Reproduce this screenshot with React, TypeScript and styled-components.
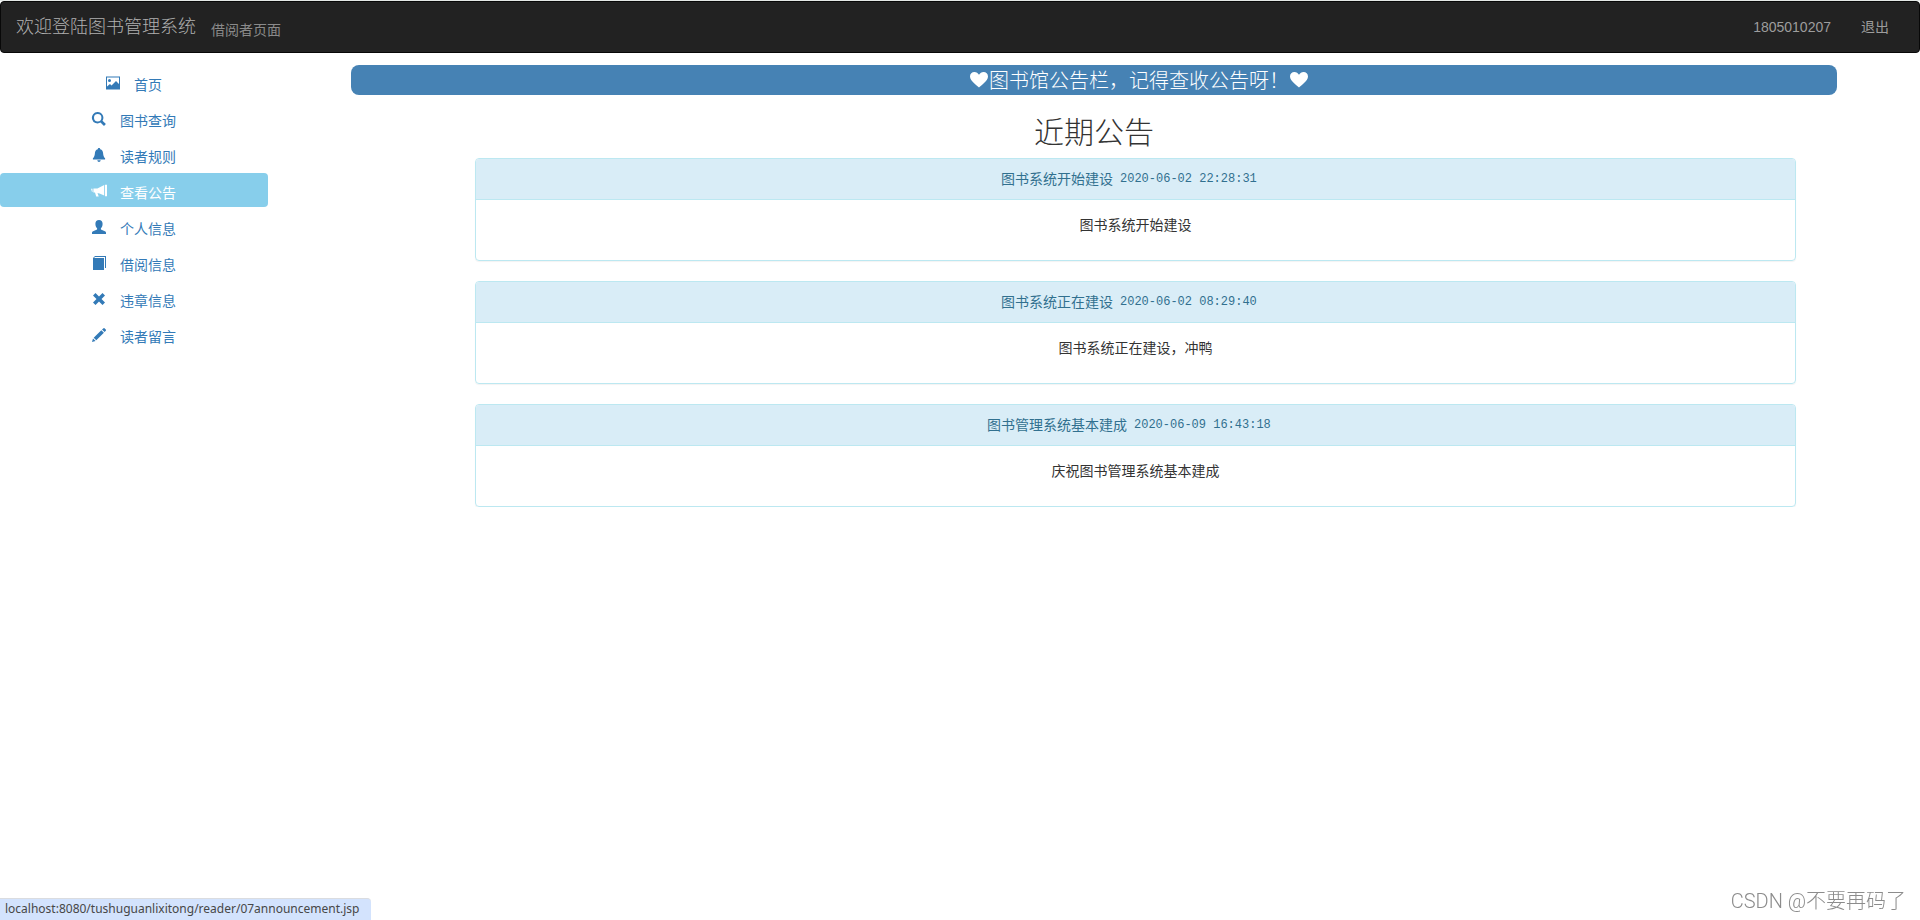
import React from 'react';
import styled, { createGlobalStyle } from 'styled-components';

const GlobalStyle = createGlobalStyle`
  * { box-sizing: border-box; }
  body {
    margin: 0;
    background: #fff;
    color: #333;
    font-family: 'Liberation Sans', 'Noto Sans CJK SC', sans-serif;
    font-size: 14px;
    font-weight: 400;
    line-height: 20px;
  }
  a { text-decoration: none; }
`;

const Page = styled.div`
  border-top: 1px solid #e4e8e6;
`;

const Navbar = styled.nav`
  display: flex;
  align-items: center;
  height: 52px;
  padding: 0 15px;
  background: #222;
  border: 1px solid #080808;
  border-radius: 4px;
  color: #9d9d9d;
`;

const Brand = styled.a`
  font-size: 18px;
  font-weight: 300;
  color: #b0b0b0;
`;

const Role = styled.span`
  margin-left: 15px;
  padding-top: 6px;
  color: #8a8a8a;
`;

const NavLinks = styled.div`
  display: flex;
  margin-left: auto;
`;

const NavLink = styled.a`
  padding: 0 15px;
  color: #9d9d9d;
`;

const Columns = styled.div`
  display: flex;
  padding-top: 12px;
`;

const Sidebar = styled.ul`
  display: flex;
  flex-direction: column;
  gap: 2px;
  flex: 0 0 14%;
  margin: 0;
  padding: 0 1px 0 0;
  list-style: none;
`;

const SideLink = styled.a<{ $active?: boolean }>`
  display: flex;
  justify-content: center;
  align-items: center;
  gap: 14px;
  height: 34px;
  padding: 10px 0 4px;
  border-radius: 4px;
  color: ${p => (p.$active ? '#fff' : '#337ab7')};
  background: ${p => (p.$active ? 'skyblue' : 'transparent')};
`;

const Glyph = styled.svg`
  display: block;
  width: 16px;
  height: 14px;
  margin: 0 -1px 4px;
  fill: currentColor;
`;

const Main = styled.main`
  flex: 1;
  margin-left: 82px;
  margin-right: 83px;
`;

const Banner = styled.div`
  display: flex;
  justify-content: center;
  align-items: center;
  height: 30px;
  padding: 2px 0 0 90px;
  border-radius: 8px;
  background: steelblue;
  color: #fff;
  font-size: 20px;
  font-weight: 300;
`;

const Heart = styled.svg`
  width: 20px;
  height: 20px;
  margin-bottom: 2px;
  fill: currentColor;
`;

const Title = styled.h1`
  margin: 20px 0 8px;
  font-size: 30px;
  font-weight: 300;
  line-height: 35px;
  text-align: center;
`;

const Notices = styled.div`
  display: flex;
  flex-direction: column;
  gap: 20px;
  margin-left: 124px;
  margin-right: 41px;
`;

const Panel = styled.article`
  border: 1px solid #bce8f1;
  border-radius: 4px;
  box-shadow: 0 1px 1px rgba(0, 0, 0, 0.05);
  text-align: center;
`;

const PanelHeading = styled.header`
  display: flex;
  justify-content: center;
  align-items: center;
  gap: 7px;
  padding: 10px 28px 10px 15px;
  border-bottom: 1px solid #bce8f1;
  border-radius: 3px 3px 0 0;
  background: #d9edf7;
  color: #31708f;
`;

const Stamp = styled.time`
  font-family: 'Liberation Mono', monospace;
  font-size: 12px;
`;

const PanelBody = styled.p`
  margin: 0;
  padding: 15px 15px 25px;
`;

const StatusBar = styled.div`
  position: fixed;
  left: 0;
  bottom: 0;
  height: 22px;
  padding: 0 12px 0 5px;
  border-top: 1px solid #dadce0;
  border-top-right-radius: 4px;
  background: #d3e3fd;
  color: #474747;
  font-family: 'Noto Sans', sans-serif;
  font-size: 12px;
  line-height: 20px;
`;

const Watermark = styled.div`
  position: fixed;
  right: 14px;
  bottom: 4px;
  color: #8c8c8c;
  font-family: Roboto, 'Noto Sans CJK SC', sans-serif;
  font-size: 20px;
  font-weight: 300;
  line-height: 30px;
`;

const icons: Record<string, React.ReactNode> = {
  image: <path fillRule="evenodd" d="M1 .5h14v13H1zM2 1.500v9L5 8l1.500 1.500L11 5l3 3V1.500zM4.500 3a1.500 1.500 0 1 1 0 3 1.500 1.500 0 0 1 0-3z" />,
  search: <path fillRule="evenodd" d="M6.700 0a5.700 5.700 0 0 1 4.800 8.700l3.400 3.300-1.900 2-3.500-3.400A5.700 5.700 0 1 1 6.700 0zm0 2a3.700 3.700 0 1 0 0 7.400 3.700 3.700 0 0 0 0-7.400z" />,
  bell: <path d="M8 0c.8 0 1.200.5 1.200 1.200C11.200 1.800 12 3.400 12.100 5.200c.2 2.600.8 4 2 5.100V11.500H1.900v-1.200c1.200-1.100 1.800-2.500 2-5.100C4 3.400 4.800 1.800 6.800 1.200 6.800.5 7.200 0 8 0zM6.300 12.300h3.400C9.500 13.400 8.900 14 8 14s-1.500-.6-1.700-1.700z" />,
  bullhorn: <path d="M14 .8h2v11.500h-2zM13.200 1v10.500L8.500 9.400 6.500 9l1.200 3.500H5.200L4 8.600H2.400V4.500h4zM0 4.800h1.500v3.300H1z" />,
  user: <path d="M8 0c2.300 0 3.600 1.500 3.600 3.800 0 1.900-.7 3.600-1.700 4.500v1.200l4 1.700c.8.4 1.100.8 1.100 1.500V14H1v-1.300c0-.7.3-1.100 1.100-1.500l4-1.700V8.300c-1-.9-1.700-2.600-1.700-4.500C4.400 1.500 5.700 0 8 0z" />,
  book: <path fillRule="evenodd" d="M4 0h11v12h-1V1H4L3 2h10v12H2V2z" />,
  remove: <path d="M4.500 1 8 4.500 11.500 1 14 3.500 10.500 7l3.500 3.500-2.500 2.500L8 9.500 4.500 13 2 10.500 5.500 7 2 3.500z" />,
  pencil: <path d="m12.500.2.7-.2L15 1.800v.8l-1.400 1.500-2.600-2.600zM10.300 2.200l2.600 2.600-7.600 7.500-2.600-2.600zM2 10.500 4.600 13 1 14z" />,
};

const menu = [
  { label: '首页', icon: 'image' },
  { label: '图书查询', icon: 'search' },
  { label: '读者规则', icon: 'bell' },
  { label: '查看公告', icon: 'bullhorn', active: true },
  { label: '个人信息', icon: 'user' },
  { label: '借阅信息', icon: 'book' },
  { label: '违章信息', icon: 'remove' },
  { label: '读者留言', icon: 'pencil' },
];

const notices = [
  { title: '图书系统开始建设', time: '2020-06-02 22:28:31', body: '图书系统开始建设' },
  { title: '图书系统正在建设', time: '2020-06-02 08:29:40', body: '图书系统正在建设，冲鸭' },
  { title: '图书管理系统基本建成', time: '2020-06-09 16:43:18', body: '庆祝图书管理系统基本建成' },
];

const HeartIcon = () => (
  <Heart viewBox="0 0 20 20" aria-hidden="true">
    <path d="M10 17.500C8.500 15.800 1 11 1 6.500 1 3.700 3 2 5.400 2 7.500 2 9 3.200 10 4.800 11 3.200 12.500 2 14.600 2 17 2 19 3.700 19 6.500c0 4.500-7.500 9.300-9 11z" />
  </Heart>
);

export default function App() {
  return (
    <Page lang="zh-CN">
      <GlobalStyle />
      <Navbar>
        <Brand href="#">欢迎登陆图书管理系统</Brand>
        <Role>借阅者页面</Role>
        <NavLinks>
          <NavLink href="#">1805010207</NavLink>
          <NavLink href="#">退出</NavLink>
        </NavLinks>
      </Navbar>
      <Columns>
        <Sidebar>
          {menu.map(item => (
            <li key={item.label}>
              <SideLink href="#" $active={item.active} aria-current={item.active ? 'page' : undefined}>
                <Glyph viewBox="0 0 16 14" aria-hidden="true">{icons[item.icon]}</Glyph>
                {item.label}
              </SideLink>
            </li>
          ))}
        </Sidebar>
        <Main>
          <Banner>
            <HeartIcon />
            图书馆公告栏，记得查收公告呀！
            <HeartIcon />
          </Banner>
          <Title>近期公告</Title>
          <Notices>
            {notices.map(n => (
              <Panel key={n.title}>
                <PanelHeading>
                  {n.title}
                  <Stamp>{n.time}</Stamp>
                </PanelHeading>
                <PanelBody>{n.body}</PanelBody>
              </Panel>
            ))}
          </Notices>
        </Main>
      </Columns>
      <StatusBar>localhost:8080/tushuguanlixitong/reader/07announcement.jsp</StatusBar>
      <Watermark>CSDN @不要再码了</Watermark>
    </Page>
  );
}
